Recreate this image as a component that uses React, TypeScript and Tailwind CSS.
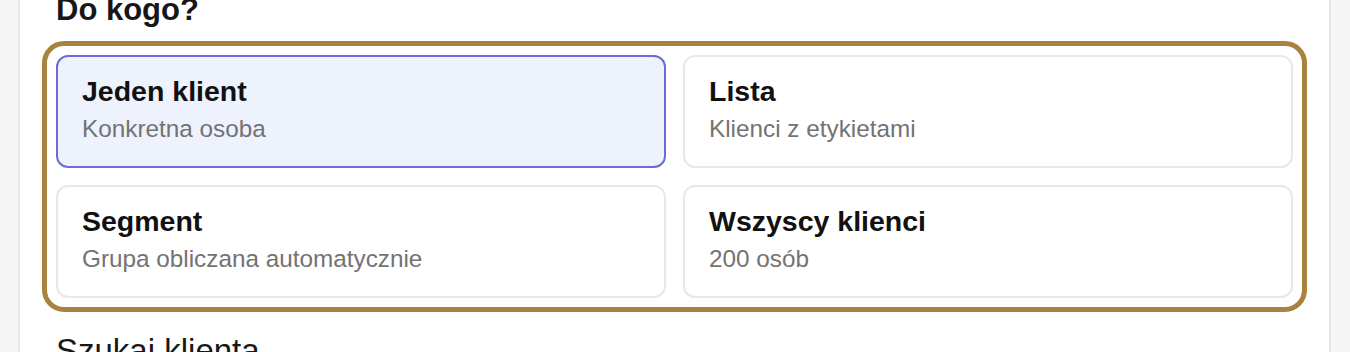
import React, { useState } from 'react';

type Option = {
  id: string;
  title: string;
  subtitle: string;
};

const OPTIONS: Option[] = [
  { id: 'one', title: 'Jeden klient', subtitle: 'Konkretna osoba' },
  { id: 'list', title: 'Lista', subtitle: 'Klienci z etykietami' },
  { id: 'segment', title: 'Segment', subtitle: 'Grupa obliczana automatycznie' },
  { id: 'all', title: 'Wszyscy klienci', subtitle: '200 osób' },
];

const App: React.FC = () => {
  const [selected, setSelected] = useState('one');

  return (
    <div
      className="flex h-[352px] w-full overflow-hidden bg-[#f5f5f5]"
      style={{ fontFamily: '"Liberation Sans", Arial, sans-serif' }}
    >
      <div className="ml-[18px] mr-[19px] flex-1 border-x-2 border-[#e6e6e6] bg-white">
        <div className="px-[22px]">
          <h2 className="ml-[14px] mt-[-8px] mb-[13px] text-[31px] font-bold leading-[36px] text-[#171717]">
            Do kogo?
          </h2>

          {/* gold frame around the choice grid */}
          <div className="rounded-[22px] border-[5px] border-[#a8833f] p-[9px]">
            <div className="grid grid-cols-2 gap-[17px]">
              {OPTIONS.map((opt) => {
                const active = opt.id === selected;
                return (
                  <button
                    key={opt.id}
                    type="button"
                    onClick={() => setSelected(opt.id)}
                    className={
                      active
                        ? 'rounded-xl border-2 border-[#6b6dd2] bg-[#edf2fd] px-[24px] pt-[17px] pb-[23px] text-left'
                        : 'rounded-xl border-2 border-[#e8e8e8] bg-white px-[24px] pt-[17px] pb-[23px] text-left'
                    }
                  >
                    <div className="text-[28.5px] font-bold leading-[34px] text-[#111111]">{opt.title}</div>
                    <div className="mt-[7px] text-[24.3px] leading-[28px] text-[#737373]">{opt.subtitle}</div>
                  </button>
                );
              })}
            </div>
          </div>

          <label className="ml-[14px] mt-[20px] block text-[33px] leading-[38px] text-[#171717]">
            Szukaj klienta
          </label>
        </div>
      </div>
    </div>
  );
};

export default App;
